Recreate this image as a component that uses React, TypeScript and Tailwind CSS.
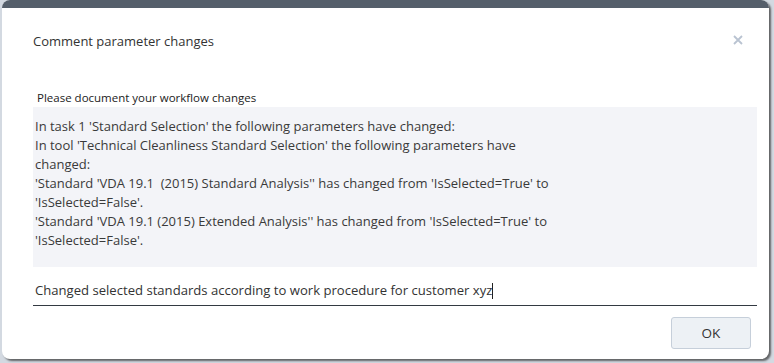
import React from 'react'

const lines = [
  "In task 1 'Standard Selection' the following parameters have changed:",
  "In tool 'Technical Cleanliness Standard Selection' the following parameters have",
  'changed:',
  "'Standard 'VDA 19.1\u00a0 (2015) Standard Analysis'' has changed from 'IsSelected=True' to",
  "'IsSelected=False'.",
  "'Standard 'VDA 19.1 (2015) Extended Analysis'' has changed from 'IsSelected=True' to",
  "'IsSelected=False'.",
]

export default function App() {
  return (
    <div className="w-[774px] h-[363px] bg-[#d3d9e1] overflow-hidden font-['Open_Sans',sans-serif]">
      <div className="ml-[2px] w-[767px] h-[359px] bg-white rounded-[8px] overflow-hidden shadow-[2px_2px_2px_rgba(60,60,60,0.75)] flex flex-col">
        <div className="h-[8px] bg-[#555f6b] shrink-0" />

        {/* header */}
        <div className="flex items-center justify-between pl-[31px] pr-[26px] pt-[23px] h-[43px]">
          <h2 className="text-[13px] leading-[20px] text-[#333]">Comment parameter changes</h2>
          <svg width="10" height="10" viewBox="0 0 10 10" className="mt-[-2px]">
            <path d="M1 1L9 9M9 1L1 9" stroke="#b9c3d1" strokeWidth="1.8" />
          </svg>
        </div>

        {/* body */}
        <div className="pl-[31px] pr-[12px] pt-[39px]">
          <div className="pl-[4px] text-[11.5px] leading-[16px] text-[#222] h-[17px]">Please document your workflow changes</div>
          <div className="bg-[#f3f4f8] h-[160px] pl-[2px] pt-[10px] text-[13px] leading-[19px] text-[#3a3a3a]">
            {lines.map((l, i) => (
              <div key={i} className="whitespace-pre">{l}</div>
            ))}
          </div>
          <div className="mt-[13px] h-[26px] border-b border-[#333a42] pl-[2px] text-[13.1px] leading-[21px] text-[#333] flex items-start">
            <span>Changed selected standards according to work procedure for customer xyz</span>
            <span className="inline-block w-px h-[16px] bg-[#222] mt-[3px]" />
          </div>
        </div>

        {/* footer */}
        <div className="flex justify-end pr-[18px] pt-[11px]">
          <button className="w-[80px] h-[32px] bg-[#edf1f5] border border-[#c6cfda] rounded-[3px] text-[13.5px] text-[#333]">
            OK
          </button>
        </div>
      </div>
    </div>
  )
}
